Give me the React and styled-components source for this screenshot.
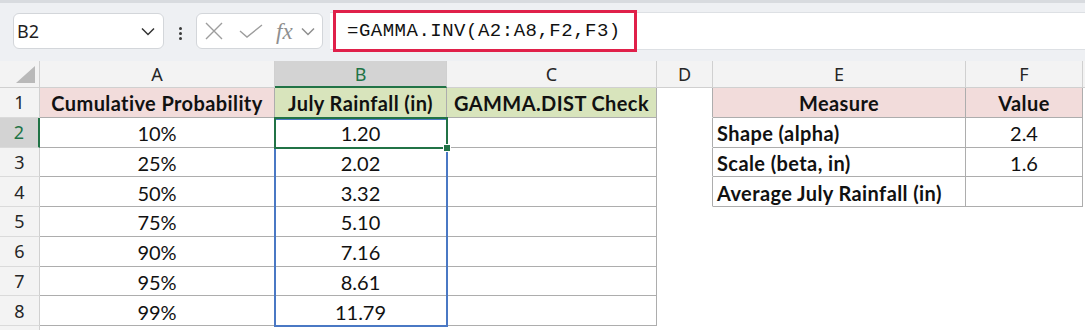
import React from 'react'
import styled, { createGlobalStyle } from 'styled-components'

const GlobalStyle = createGlobalStyle`
  html, body {
    margin: 0;
    padding: 0;
    background: #ffffff;
  }
  body {
    font-family: 'Lato', 'Liberation Sans', sans-serif;
    height: 330px;
    overflow: hidden;
  }
`

const PINK = '#f2dcdb'
const GREEN = '#d8e4bc'
const EDGE = '#adadad'
const XL_GREEN = '#217346'

const columns = [
  { key: 'A' },
  { key: 'B', active: true },
  { key: 'C' },
  { key: 'D' },
  { key: 'E' },
  { key: 'F' },
  { key: '' },
]

const probs = ['10%', '25%', '50%', '75%', '90%', '95%', '99%']
const rainfall = ['1.20', '2.02', '3.32', '5.10', '7.16', '8.61', '11.79']
const params = [
  ['Shape (alpha)', '2.4'],
  ['Scale (beta, in)', '1.6'],
  ['Average July Rainfall (in)', ''],
]

const App = () => {
  const sheetRows = []

  // row 1: headers of both tables
  sheetRows.push([
    { text: 'Cumulative Probability', fill: PINK, bold: true, br: true, bb: true },
    { text: 'July Rainfall (in)', fill: GREEN, bold: true, br: true, bb: true },
    { text: 'GAMMA.DIST Check', fill: GREEN, bold: true, br: true, bb: true },
    { text: '', br: true },
    { text: 'Measure', fill: PINK, bold: true, br: true, bb: true },
    { text: 'Value', fill: PINK, bold: true, br: true, bb: true },
    { text: '' },
  ])

  probs.forEach((p, i) => {
    const param = params[i]
    sheetRows.push([
      { text: p, br: true, bb: true },
      { text: rainfall[i], br: true, bb: true },
      { text: '', br: true, bb: true },
      { text: '', br: !!param },
      param
        ? { text: param[0], bold: true, left: true, br: true, bb: true }
        : { text: '' },
      param ? { text: param[1], br: true, bb: true } : { text: '' },
      { text: '' },
    ])
  })

  // row 9 only peeks in at the bottom edge
  sheetRows.push(columns.map(() => ({ text: '' })))

  return (
    <>
      <GlobalStyle />
      <Toolbar>
        <NameBox>
          <span>B2</span>
          <Chevron />
        </NameBox>
        <Dots>
          <i />
          <i />
          <i />
        </Dots>
        <FxBox>
          <svg width="18" height="18" viewBox="0 0 18 18">
            <path d="M1 1 L17 17 M17 1 L1 17" stroke="#9d9d9d" strokeWidth="1.4" fill="none" />
          </svg>
          <svg width="24" height="14" viewBox="0 0 24 14" style={{ marginLeft: 16 }}>
            <path d="M1 7 L8 13 L23 1" stroke="#9d9d9d" strokeWidth="1.4" fill="none" />
          </svg>
          <FxLabel>fx</FxLabel>
          <Chevron $muted />
        </FxBox>
        <FormulaBar>
          <FormulaHighlight>=GAMMA.INV(A2:A8,F2,F3)</FormulaHighlight>
        </FormulaBar>
      </Toolbar>

      <Sheet>
        <Corner>
          <Triangle />
        </Corner>
        {columns.map((c, i) => (
          <ColHead key={i} $active={c.active}>
            {c.key}
          </ColHead>
        ))}

        {sheetRows.map((cells, r) => (
          <React.Fragment key={r}>
            <RowHead $active={r === 1}>{r < 8 ? r + 1 : ''}</RowHead>
            {cells.map((c, ci) => (
              <Cell
                key={ci}
                $fill={c.fill}
                $bold={c.bold}
                $left={c.left}
                $br={c.br}
                $bb={c.bb}
              >
                {c.text}
              </Cell>
            ))}
          </React.Fragment>
        ))}

        <RangeOutline />
        <Selection />
      </Sheet>
    </>
  )
}

const Chevron = ({ $muted }) => (
  <svg width="14" height="9" viewBox="0 0 14 9">
    <path
      d="M1 1.5 L7 7.5 L13 1.5"
      stroke={$muted ? '#8f8f8f' : '#333'}
      strokeWidth="1.5"
      fill="none"
    />
  </svg>
)

export default App

const Toolbar = styled.div`
  display: flex;
  align-items: flex-start;
  height: 61px;
  box-sizing: border-box;
  padding: 10px 0 0 13px;
  background: #eef0f3;
  border-top: 3px solid #d8dbdf;
`

const NameBox = styled.div`
  display: flex;
  align-items: center;
  justify-content: space-between;
  width: 151px;
  height: 36px;
  box-sizing: border-box;
  padding: 0 8px 0 3px;
  background: #fff;
  border: 1px solid #d3d6da;
  border-radius: 6px;
  font-family: 'Noto Sans', 'Open Sans', sans-serif;
  font-size: 18px;
  color: #1f1f1f;
`

const Dots = styled.div`
  display: flex;
  flex-direction: column;
  gap: 2px;
  margin: 14px 14px 0 15px;

  i {
    display: block;
    width: 3px;
    height: 3px;
    background: #3a3a3a;
    border-radius: 50%;
  }
`

const FxBox = styled.div`
  display: flex;
  align-items: center;
  width: 127px;
  height: 36px;
  box-sizing: border-box;
  padding-left: 8px;
  background: #fff;
  border: 1px solid #d3d6da;
  border-radius: 6px;
`

const FxLabel = styled.span`
  margin: 0 8px 0 13px;
  font-family: 'Liberation Serif', 'DejaVu Serif', serif;
  font-style: italic;
  font-size: 23px;
  color: #8f8f8f;
  line-height: 1;
`

const FormulaBar = styled.div`
  flex: 1;
  display: flex;
  align-items: center;
  height: 38px;
  margin: -1px 0 0 7px;
  background: #fff;
  border-top: 1px solid #dde0e4;
  border-bottom: 1px solid #dde0e4;
  box-sizing: border-box;
`

const FormulaHighlight = styled.div`
  display: flex;
  align-items: center;
  flex-shrink: 0;
  width: 304px;
  height: 42px;
  margin-left: 3px;
  box-sizing: border-box;
  padding-left: 11px;
  border: 3px solid #e0204a;
  font-family: 'Liberation Mono', 'DejaVu Sans Mono', monospace;
  font-size: 19px;
  letter-spacing: 0.5px;
  color: #111;
`

const Sheet = styled.div`
  position: relative;
  display: grid;
  grid-template-columns: 40px 235px 172px 210px 56px 253px 117px 1fr;
  grid-template-rows: 27px repeat(9, 29.75px);
  background: #fff;
`

const Corner = styled.div`
  display: flex;
  align-items: flex-end;
  justify-content: flex-end;
  padding: 0 4px 4px 0;
  background: #f3f3f3;
  border-right: 1px solid #d0d0d0;
  border-bottom: 1px solid #d0d0d0;
`

const Triangle = styled.div`
  width: 19px;
  height: 17px;
  background: #b9b9b9;
  clip-path: polygon(100% 0, 100% 100%, 0 100%);
`

const ColHead = styled.div`
  display: flex;
  align-items: center;
  justify-content: center;
  box-sizing: border-box;
  background: ${(p) => (p.$active ? '#d3d3d3' : '#f3f3f3')};
  color: ${(p) => (p.$active ? XL_GREEN : '#262626')};
  border-right: 1px solid #d0d0d0;
  border-bottom: ${(p) => (p.$active ? `2px solid ${XL_GREEN}` : '1px solid #d0d0d0')};
  font-family: 'Noto Sans', 'Open Sans', sans-serif;
  font-size: 18px;
  padding-top: ${(p) => (p.$active ? '1px' : '0')};
`

const RowHead = styled.div`
  display: flex;
  align-items: center;
  justify-content: center;
  box-sizing: border-box;
  background: ${(p) => (p.$active ? '#d3d3d3' : '#f3f3f3')};
  color: ${(p) => (p.$active ? XL_GREEN : '#262626')};
  border-right: ${(p) => (p.$active ? `2px solid ${XL_GREEN}` : '1px solid #d0d0d0')};
  border-bottom: 1px solid #dadada;
  font-family: 'Noto Sans', 'Open Sans', sans-serif;
  font-size: 18px;
`

const Cell = styled.div`
  display: flex;
  align-items: center;
  justify-content: ${(p) => (p.$left ? 'flex-start' : 'center')};
  box-sizing: border-box;
  padding: 2px 4px 0;
  white-space: nowrap;
  overflow: hidden;
  background: ${(p) => p.$fill || '#fff'};
  border-right: 1px solid ${(p) => (p.$br ? EDGE : 'transparent')};
  border-bottom: 1px solid ${(p) => (p.$bb ? EDGE : 'transparent')};
  font-family: 'Lato', 'Liberation Sans', sans-serif;
  font-size: 20px;
  font-weight: ${(p) => (p.$bold ? 700 : 400)};
  letter-spacing: ${(p) => (p.$bold ? '0.4px' : '0')};
  color: #111;
`

/* overlays: absolutely positioned grid children sit on their grid area
   without taking part in auto-placement */
const RangeOutline = styled.div`
  position: absolute;
  grid-column: 3 / 4;
  grid-row: 3 / 10;
  inset: 0 -1px -1px -1px;
  border: 2px solid #4a78c4;
  pointer-events: none;
`

const Selection = styled.div`
  position: absolute;
  grid-column: 3 / 4;
  grid-row: 3 / 4;
  inset: -1px;
  border: 2px solid ${XL_GREEN};
  pointer-events: none;

  &::after {
    content: '';
    position: absolute;
    right: -5px;
    bottom: -5px;
    width: 6px;
    height: 6px;
    background: ${XL_GREEN};
    border: 1px solid #fff;
  }
`
